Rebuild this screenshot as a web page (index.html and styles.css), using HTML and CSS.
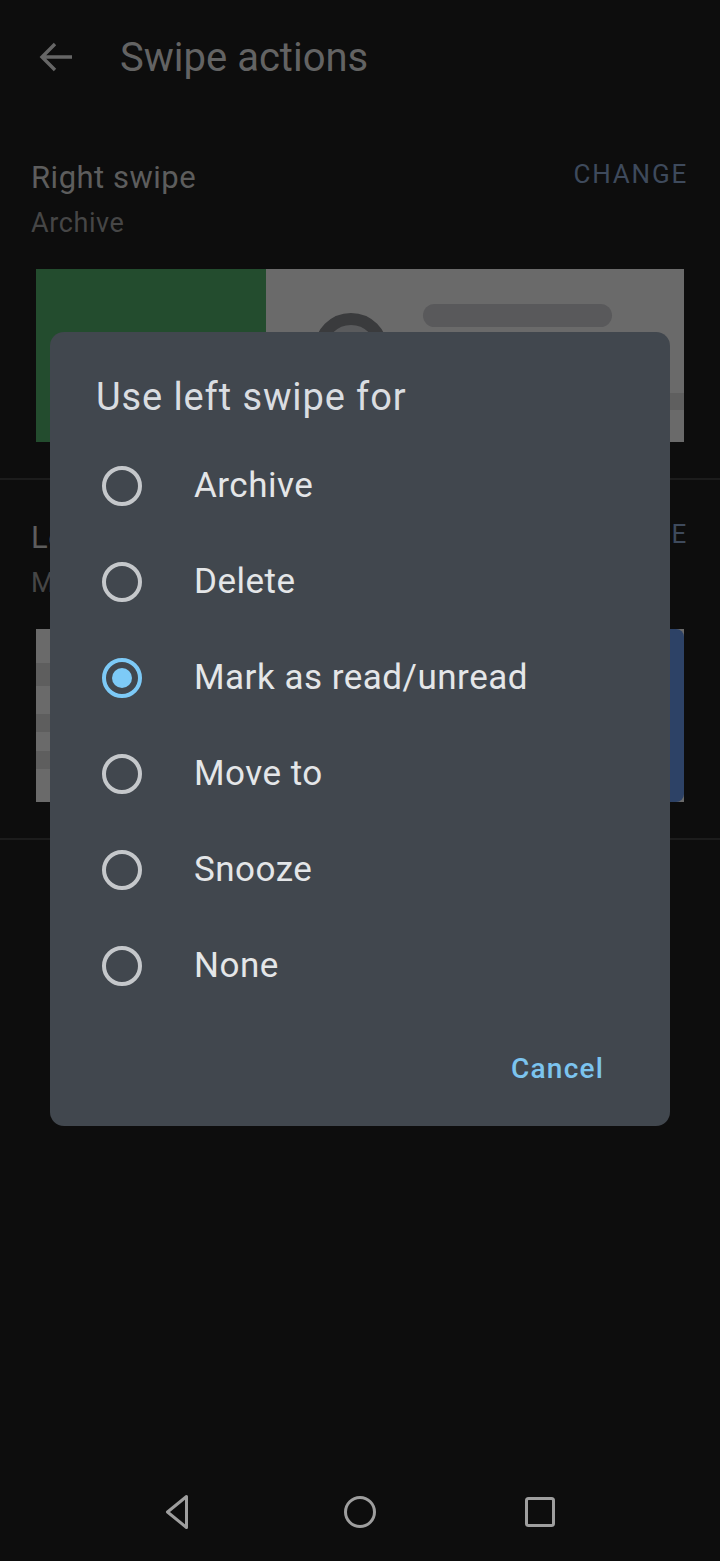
FILE: index.html
```html
<!DOCTYPE html>
<html lang="en">
<head>
<meta charset="utf-8">
<title>Swipe actions</title>
<link rel="stylesheet" href="styles.css">
</head>
<body>
<div class="screen">
  <header class="appbar">
    <svg class="back" viewBox="0 0 34 30" width="34" height="30" aria-hidden="true">
      <path d="M33 15H3M16 2L3 15l13 13" fill="none" stroke="currentColor" stroke-width="3.4"/>
    </svg>
    <h1 class="appbar-title">Swipe actions</h1>
  </header>

  <main class="content">
    <section class="setting">
      <div class="setting-head">
        <div class="setting-text">
          <div class="setting-title">Right swipe</div>
          <div class="setting-sub">Archive</div>
        </div>
        <div class="change">CHANGE</div>
      </div>
      <div class="preview">
        <div class="action action-green"></div>
        <div class="mail">
          <div class="avatar"></div>
          <div class="mail-lines">
            <div class="pill"></div>
            <div class="band"></div>
          </div>
        </div>
      </div>
    </section>

    <section class="setting">
      <div class="setting-head">
        <div class="setting-text">
          <div class="setting-title">Left swipe</div>
          <div class="setting-sub">Mark as read/unread</div>
        </div>
        <div class="change">CHANGE</div>
      </div>
      <div class="preview">
        <div class="mail-shifted">
          <div class="stripe s1"></div>
          <div class="stripe s2"></div>
          <div class="stripe s1 h28"></div>
          <div class="stripe s2 h18"></div>
          <div class="stripe s1 h19"></div>
          <div class="stripe s2 h18"></div>
          <div class="stripe s1 h33"></div>
        </div>
        <div class="action action-blue"></div>
      </div>
    </section>
  </main>

  <nav class="navbar">
    <svg class="nav-icon" viewBox="0 0 48 48" width="48" height="48" aria-hidden="true">
      <path d="M30.5 8.5L11.5 24l19 15.5z" fill="none" stroke="currentColor" stroke-width="3" stroke-linejoin="round"/>
    </svg>
    <svg class="nav-icon" viewBox="0 0 48 48" width="48" height="48" aria-hidden="true">
      <circle cx="24" cy="24" r="14.5" fill="none" stroke="currentColor" stroke-width="3"/>
    </svg>
    <svg class="nav-icon" viewBox="0 0 48 48" width="48" height="48" aria-hidden="true">
      <rect x="10.5" y="10.5" width="27" height="27" rx="2" fill="none" stroke="currentColor" stroke-width="3"/>
    </svg>
  </nav>

  <div class="dialog" role="dialog" aria-label="Use left swipe for">
    <h2 class="dialog-title">Use left swipe for</h2>
    <ul class="options">
      <li class="option"><span class="radio"></span><span class="option-label">Archive</span></li>
      <li class="option"><span class="radio"></span><span class="option-label">Delete</span></li>
      <li class="option"><span class="radio radio-on"></span><span class="option-label">Mark as read/unread</span></li>
      <li class="option"><span class="radio"></span><span class="option-label">Move to</span></li>
      <li class="option"><span class="radio"></span><span class="option-label">Snooze</span></li>
      <li class="option"><span class="radio"></span><span class="option-label">None</span></li>
    </ul>
    <div class="dialog-actions">
      <span class="btn-text">Cancel</span>
    </div>
  </div>
</div>
</body>
</html>
```

FILE: styles.css
```css
* { box-sizing: border-box; }

html, body {
  margin: 0;
  padding: 0;
  background: #0d0d0d;
}

body {
  font-family: Roboto, "Noto Sans", "Liberation Sans", sans-serif;
}

.screen {
  position: relative;
  width: 720px;
  height: 1561px;
  display: flex;
  flex-direction: column;
  overflow: hidden;
  background: #0d0d0d;
}

/* App bar */
.appbar {
  height: 120px;
  display: flex;
  align-items: flex-start;
  padding: 0 0 0 39px;
}

.back {
  color: #666666;
  margin-top: 42px;
  flex: none;
}

.appbar-title {
  margin: 0 0 0 47px;
  padding-top: 30px;
  font-size: 40px;
  line-height: 56px;
  font-weight: 400;
  color: #636363;
  letter-spacing: 0;
}

/* Settings */
.content {
  flex: 1;
}

.setting {
  height: 360px;
  padding: 38px 0 0 0;
  border-bottom: 2px solid #1c1c1c;
}

.setting-head {
  display: flex;
  justify-content: space-between;
  align-items: flex-start;
  padding: 0 33px 0 31px;
}

.setting-title {
  font-size: 31px;
  line-height: 40px;
  color: #5d5d5d;
  letter-spacing: 0.5px;
}

.setting-sub {
  margin-top: 7px;
  font-size: 27px;
  line-height: 36px;
  color: #464646;
  letter-spacing: 0.6px;
}

.change {
  margin-top: -2px;
  font-size: 26px;
  line-height: 36px;
  color: #3e4a5c;
  letter-spacing: 1.8px;
  margin-right: -1px;
}

.preview {
  margin: 28px 36px 0;
  height: 173px;
  display: flex;
  background: #6a6a6a;
}

.action {
  height: 100%;
}

.action-green {
  width: 230px;
  background: #234c2e;
}

.mail {
  flex: 1;
  display: flex;
  align-items: flex-start;
  padding: 35px 0 0 48px;
}

.avatar {
  width: 74px;
  height: 74px;
  margin-top: 9px;
  border-radius: 50%;
  border: 12px solid #3a3b3d;
  background: #5a5b5d;
  flex: none;
}

.mail-lines {
  flex: 1;
  margin-left: 35px;
}

.pill {
  width: 189px;
  height: 23px;
  border-radius: 12px;
  background: #59595b;
}

.band {
  margin-top: 66px;
  height: 17px;
  background: #5f5f5f;
}

.mail-shifted {
  width: 420px;
  display: flex;
  flex-direction: column;
}

.stripe { height: 34px; }
.stripe.s1 { background: #6a6a6a; }
.stripe.s2 { background: #5e5e5e; height: 23px; }
.stripe.h28 { height: 28px; }
.stripe.h18 { height: 18px; }
.stripe.h19 { height: 19px; }
.stripe.h33 { height: 33px; }

.action-blue {
  flex: 1;
  background: #2d4266;
  border-radius: 0 8px 8px 0;
}

/* Nav bar */
.navbar {
  height: 96px;
  display: flex;
  justify-content: center;
  align-items: center;
  gap: 132px;
  padding-bottom: 2px;
}

.nav-icon {
  color: #9e9e9e;
  display: block;
}

/* Dialog */
.dialog {
  position: absolute;
  left: 50px;
  top: 332px;
  width: 620px;
  height: 794px;
  border-radius: 14px;
  background: #41474e;
  padding: 41px 0 0 0;
  display: flex;
  flex-direction: column;
}

.dialog-title {
  margin: 0;
  padding-left: 46px;
  font-size: 38px;
  line-height: 48px;
  font-weight: 400;
  color: #dadde1;
  letter-spacing: 0.9px;
}

.options {
  list-style: none;
  margin: 17px 0 0;
  padding: 0 0 0 52px;
}

.option {
  height: 96px;
  display: flex;
  align-items: center;
}

.radio {
  width: 40px;
  height: 40px;
  border-radius: 50%;
  border: 4px solid #c5c8cb;
  display: flex;
  align-items: center;
  justify-content: center;
  flex: none;
}

.radio-on {
  border-color: #7dcaf7;
}

.radio-on::after {
  content: "";
  width: 20px;
  height: 20px;
  border-radius: 50%;
  background: #7dcaf7;
}

.option-label {
  margin-left: 52px;
  font-size: 35px;
  line-height: 40px;
  color: #e4e6e8;
  letter-spacing: 0.5px;
}

.dialog-actions {
  display: flex;
  justify-content: flex-end;
  padding: 35px 66px 0 0;
}

.btn-text {
  font-size: 28px;
  line-height: 40px;
  font-weight: 500;
  color: #7cc4ee;
  letter-spacing: 1.2px;
}
```
